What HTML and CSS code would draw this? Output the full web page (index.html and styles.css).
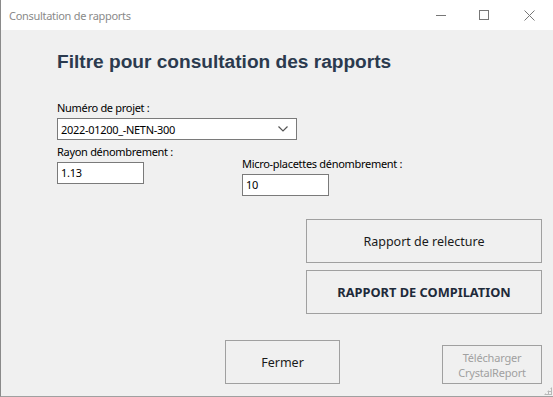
FILE: index.html
```html
<!DOCTYPE html>
<html lang="fr">
<head>
  <meta charset="UTF-8">
  <title>Consultation de rapports</title>
  <link rel="stylesheet" href="styles.css">
</head>
<body>

  <div class="window">
    <!-- Barre de titre -->
    <div class="titlebar">
      <span class="title">Consultation de rapports</span>
      <div class="controls">
        <span class="ctrl">
          <svg width="10" height="10" viewBox="0 0 10 10"><path d="M0 5.5h10" stroke="#777" stroke-width="1"/></svg>
        </span>
        <span class="ctrl">
          <svg width="10" height="10" viewBox="0 0 10 10"><rect x="0.5" y="0.5" width="9" height="9" fill="none" stroke="#777" stroke-width="1"/></svg>
        </span>
        <span class="ctrl">
          <svg width="11" height="11" viewBox="0 0 11 11"><path d="M0.5 0.5l10 10M10.5 0.5l-10 10" stroke="#777" stroke-width="1"/></svg>
        </span>
      </div>
    </div>

    <!-- Contenu -->
    <div class="content">
      <h1>Filtre pour consultation des rapports</h1>

      <div class="field">
        <label>Numéro de projet :</label>
        <div class="combo">
          <span>2022-01200_-NETN-300</span>
          <svg width="10" height="6" viewBox="0 0 10 6"><path d="M0.5 0.5l4.5 4.5 4.5-4.5" fill="none" stroke="#555" stroke-width="1.2"/></svg>
        </div>
      </div>

      <div class="row">
        <div class="field">
          <label>Rayon dénombrement :</label>
          <div class="textbox">1.13</div>
        </div>
        <div class="field field-right">
          <label>Micro-placettes dénombrement :</label>
          <div class="textbox">10</div>
        </div>
      </div>

      <div class="actions">
        <button class="btn btn-big">Rapport de relecture</button>
        <button class="btn btn-big btn-bold">RAPPORT DE COMPILATION</button>
      </div>

      <div class="footer">
        <button class="btn btn-close">Fermer</button>
        <button class="btn btn-disabled">Télécharger<br>CrystalReport</button>
      </div>
    </div>

    <div class="grip"></div>
  </div>

</body>
</html>
```

FILE: styles.css
```css
body {
  margin: 0;
  padding: 0;
  font-family: "Noto Sans", sans-serif;
  background-color: #f0f0f0;
}
.window {
  position: relative;
  width: 552px;
  height: 396px;
  border-left: 1px solid #8a8a8a;
  border-bottom: 1px solid #a0a0a0;
  background-color: #f0f0f0;
  color: #000;
}
.titlebar {
  height: 30px;
  background-color: #fff;
  display: flex;
  align-items: center;
  justify-content: space-between;
}
.title {
  padding-left: 8px;
  font-size: 11px;
  letter-spacing: -0.3px;
  color: #8a8a8a;
}
.controls {
  display: flex;
  height: 100%;
}
.ctrl {
  width: 43px;
  display: flex;
  align-items: center;
  justify-content: center;
}
.ctrl:last-child {
  width: 48px;
}
.content {
  padding-left: 56px;
  font-size: 11px;
  letter-spacing: -0.3px;
}
h1 {
  margin: 19px 0 25px 0;
  font-family: "Liberation Sans", Arial, sans-serif;
  font-size: 19.1px;
  font-weight: bold;
  letter-spacing: 0;
  color: #2b3a4e;
  line-height: 26px;
}
.field label {
  display: block;
  line-height: 15px;
  margin-bottom: 3px;
  white-space: nowrap;
}
.combo {
  box-sizing: border-box;
  width: 240px;
  height: 22px;
  border: 1px solid #7a7a7a;
  background-color: #fff;
  display: flex;
  align-items: center;
  justify-content: space-between;
  padding: 0 8px 0 3px;
}
.row {
  display: grid;
  grid-template-columns: 185px auto;
  margin-top: 4px;
}
.field-right {
  margin-top: 12px;
}
.textbox {
  box-sizing: border-box;
  width: 87px;
  height: 22px;
  border: 1px solid #7a7a7a;
  background-color: #fff;
  padding: 0 3px;
  line-height: 20px;
}
.actions {
  display: flex;
  flex-direction: column;
  align-items: flex-end;
  gap: 7px;
  margin-top: 23px;
  padding-right: 11px;
}
.btn {
  box-sizing: border-box;
  font-family: "Noto Sans", sans-serif;
  background-color: #f0f0f0;
  border: 1px solid #a0a0a0;
  color: #1a1a1a;
  padding: 0;
  letter-spacing: 0;
}
.btn-big {
  width: 236px;
  height: 44px;
  font-size: 12.5px;
}
.btn-bold {
  font-weight: bold;
  font-size: 12.8px;
  color: #1e2a3a;
}
.footer {
  display: flex;
  align-items: flex-end;
  margin-top: 26px;
  padding-left: 168px;
}
.btn-close {
  width: 115px;
  height: 44px;
  font-size: 12.5px;
}
.btn-disabled {
  width: 100px;
  height: 39px;
  margin-left: 102px;
  font-size: 11px;
  letter-spacing: -0.2px;
  color: #a0a0a0;
  line-height: 15px;
}
.grip {
  position: absolute;
  right: 1px;
  bottom: 1px;
  width: 8px;
  height: 8px;
  background-image: radial-gradient(circle, #b8b8b8 1px, transparent 1.2px);
  background-size: 3px 3px;
  clip-path: polygon(100% 0, 100% 100%, 0 100%);
}
```
